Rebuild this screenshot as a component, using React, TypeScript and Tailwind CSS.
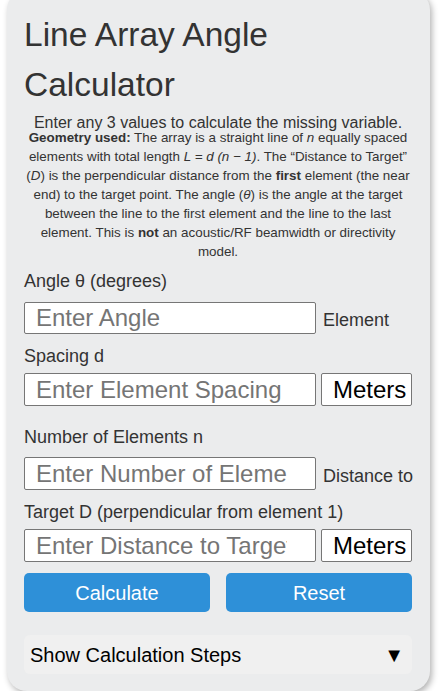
import React from 'react';

const inputCls =
  'w-[292px] rounded-[2px] border border-[#767676] bg-white pl-[11px] pr-[28px] text-[24px] outline-none placeholder:text-[#757575]';

function UnitBox() {
  return (
    <div className="flex h-[33px] w-[91px] items-center overflow-hidden whitespace-nowrap rounded-[2px] border border-[#767676] bg-white pl-[11px] text-[24px] leading-[28px] text-black">
      Meters
    </div>
  );
}

export default function App() {
  return (
    <div className="min-h-screen bg-white font-['Liberation_Sans',Arial,sans-serif] text-[#333]">
      <div className="ml-[7px] mt-[-10px] w-[423px] rounded-[20px] bg-[#ebeced] pt-[20px] pl-[17px] pr-[18px] pb-[17px] shadow-[2px_3px_6px_rgba(0,0,0,0.3)]">
        <h1 className="text-[33.5px] leading-[50px] font-normal text-[#333]">
          Line Array Angle Calculator
        </h1>

        <p className="mt-[5px] text-center text-[16px] leading-[16px]">
          Enter any 3 values to calculate the missing variable.
        </p>
        <p className="mt-[-3px] text-center text-[13.4px] leading-[19px]">
          <strong>Geometry used:</strong> The array is a straight line of <i>n</i> equally spaced
          elements with total length <i>L = d (n − 1)</i>. The “Distance to Target” (<i>D</i>) is
          the perpendicular distance from the <strong>first</strong> element (the near end) to the
          target point. The angle (<i>θ</i>) is the angle at the target between the line to the
          first element and the line to the last element. This is <strong>not</strong> an
          acoustic/RF beamwidth or directivity model.
        </p>

        {/* Angle */}
        <label className="mt-[10px] block text-[18px] leading-[21px]">Angle θ (degrees)</label>
        <div className="mt-[10px] flex items-baseline gap-[7px]">
          <input type="text" placeholder="Enter Angle" className={`h-[32px] ${inputCls}`} />
          <span className="text-[18px] leading-[21px]">Element</span>
        </div>

        {/* Spacing */}
        <label className="mt-[12px] block text-[18px] leading-[21px]">Spacing d</label>
        <div className="mt-[6px] flex gap-[5px]">
          <input type="text" placeholder="Enter Element Spacing" className={`h-[33px] ${inputCls}`} />
          <UnitBox />
        </div>

        {/* Number of elements */}
        <label className="mt-[21px] block text-[18px] leading-[21px]">Number of Elements n</label>
        <div className="mt-[9px] flex items-baseline gap-[7px]">
          <input type="text" placeholder="Enter Number of Elements" className={`h-[33px] ${inputCls}`} />
          <span className="whitespace-nowrap text-[18px] leading-[21px]">Distance to</span>
        </div>

        {/* Distance */}
        <label className="mt-[12px] block text-[18px] leading-[21px]">
          Target D (perpendicular from element 1)
        </label>
        <div className="mt-[6px] flex gap-[5px]">
          <input type="text" placeholder="Enter Distance to Target" className={`h-[33px] ${inputCls}`} />
          <UnitBox />
        </div>

        <div className="mt-[11px] grid grid-cols-2 gap-[16px]">
          <button className="h-[39px] rounded-[5px] bg-[#2e90d8] text-[20px] text-white">
            Calculate
          </button>
          <button className="h-[39px] rounded-[5px] bg-[#2e90d8] text-[20px] text-white">
            Reset
          </button>
        </div>

        <div className="mt-[23px] flex h-[39px] items-center justify-between rounded-[6px] bg-[#f0f0f0] pl-[6px] pr-[8px] text-[20px] text-black">
          <span>Show Calculation Steps</span>
          <span>▼</span>
        </div>
      </div>
    </div>
  );
}
